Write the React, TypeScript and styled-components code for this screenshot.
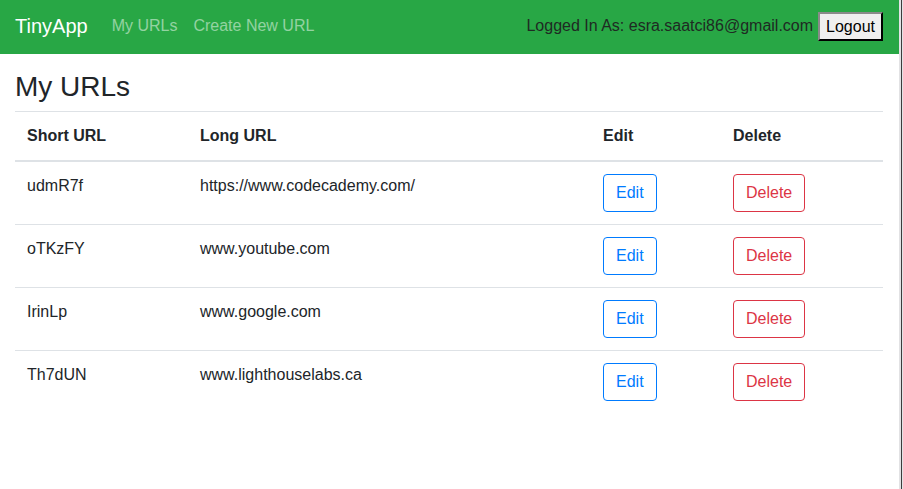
import React from "react";
import styled, { createGlobalStyle } from "styled-components";

const GlobalStyle = createGlobalStyle`
  html, body { margin: 0; padding: 0; background: #fff; }
  body {
    font-family: "Liberation Sans", Arial, sans-serif;
    font-size: 16px;
    line-height: 1.5;
    color: #212529;
  }
  * { box-sizing: border-box; }
`;

const Frame = styled.div`
  display: flex;
  min-height: 489px;
`;

const Page = styled.div`
  flex: 1;
  min-width: 0;
`;

const WindowEdge = styled.div`
  width: 4px;
  flex: none;
  border-left: 2px solid #e2e2e4;
  border-right: 1px solid #e2e2e4;
  background: #3c3c3c;
`;

const Navbar = styled.nav`
  height: 54px;
  background: #28a745;
  display: flex;
  align-items: center;
  padding: 0 16px 2px 15px;
`;

const Brand = styled.a`
  font-size: 20px;
  line-height: 30px;
  color: #fff;
  text-decoration: none;
  margin-right: 16px;
`;

const NavLink = styled.a`
  color: rgba(255, 255, 255, 0.5);
  text-decoration: none;
  padding: 0 8px;
  line-height: 24px;
`;

const NavRight = styled.div`
  margin-left: auto;
  display: flex;
  align-items: center;
  gap: 5px;
`;

const UserText = styled.span`
  color: #1f2a23;
`;

const LogoutButton = styled.button`
  font-family: "Liberation Sans", Arial, sans-serif;
  font-size: 16px;
  line-height: 23px;
  padding: 1px 6px;
  background: #efefef;
  color: #000;
  border: 2px outset #767676;
  border-color: #8a8a8a #1e1e1e #1e1e1e #8a8a8a;
  border-radius: 0;
`;

const Container = styled.main`
  padding: 0 16px 0 15px;
`;

const Title = styled.h3`
  margin: 16px 0 7px;
  font-size: 28px;
  font-weight: 500;
  line-height: 1.2;
`;

const Table = styled.table`
  width: 100%;
  border-collapse: collapse;
`;

const HeadCell = styled.th<{ $w: number }>`
  width: ${(p) => p.$w}px;
  text-align: left;
  padding: 12px;
  font-weight: 700;
  border-top: 1px solid #dee2e6;
  border-bottom: 2px solid #dee2e6;
  vertical-align: bottom;
`;

const Row = styled.tr`
  & + & td { border-top: 1px solid #dee2e6; }
`;

const Cell = styled.td`
  padding: 12px;
  vertical-align: top;
`;

const OutlineButton = styled.button<{ $tone: string }>`
  font-family: "Liberation Sans", Arial, sans-serif;
  font-size: 16px;
  line-height: 24px;
  padding: 6px 12px;
  border: 1px solid ${(p) => p.$tone};
  color: ${(p) => p.$tone};
  background: transparent;
  border-radius: 4px;
  display: inline-block;
`;

const rows = [
  { short: "udmR7f", long: "https://www.codecademy.com/" },
  { short: "oTKzFY", long: "www.youtube.com" },
  { short: "IrinLp", long: "www.google.com" },
  { short: "Th7dUN", long: "www.lighthouselabs.ca" },
];

export default function App() {
  return (
    <>
      <GlobalStyle />
      <Frame>
        <Page>
          <Navbar>
            <Brand href="#">TinyApp</Brand>
            <NavLink href="#">My URLs</NavLink>
            <NavLink href="#">Create New URL</NavLink>
            <NavRight>
              <UserText>Logged In As: esra.saatci86@gmail.com</UserText>
              <LogoutButton>Logout</LogoutButton>
            </NavRight>
          </Navbar>
          <Container>
            <Title>My URLs</Title>
            <Table>
              <thead>
                <tr>
                  <HeadCell $w={173}>Short URL</HeadCell>
                  <HeadCell $w={403}>Long URL</HeadCell>
                  <HeadCell $w={130}>Edit</HeadCell>
                  <HeadCell $w={162}>Delete</HeadCell>
                </tr>
              </thead>
              <tbody>
                {rows.map((r) => (
                  <Row key={r.short}>
                    <Cell>{r.short}</Cell>
                    <Cell>{r.long}</Cell>
                    <Cell>
                      <OutlineButton $tone="#007bff">Edit</OutlineButton>
                    </Cell>
                    <Cell>
                      <OutlineButton $tone="#dc3545">Delete</OutlineButton>
                    </Cell>
                  </Row>
                ))}
              </tbody>
            </Table>
          </Container>
        </Page>
        <WindowEdge />
      </Frame>
    </>
  );
}
